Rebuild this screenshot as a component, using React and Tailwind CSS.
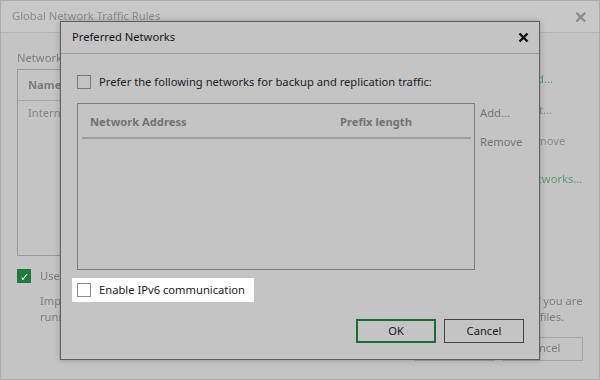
import React from 'react';

const font = "font-['Noto_Sans','Liberation_Sans',sans-serif]";

const Box = ({ className = '' }) => (
  <span className={`block w-[14px] h-[14px] border shrink-0 ${className}`} />
);

const BackgroundWindow = () => (
  <div className="w-full h-full border border-[#ababab] bg-[#c4c4c4] blur-[0.7px] flex flex-col overflow-hidden">
    <div className="h-[32px] border-b border-[#b4b4b4] bg-[#c8c8c8] flex items-center justify-between pl-[11px] pr-[12px]">
      <span className="text-[11.2px] text-[#8c8c8c]">Global Network Traffic Rules</span>
      <span className="text-[16px] font-bold text-[#8c8c8c]">✕</span>
    </div>
    <div className="flex flex-col px-[16px] text-[11.2px]">
      <div className="mt-[16px] leading-[18px] text-[#7e7e7e]">Network traffic rules:</div>
      <div className="flex mt-[2px] gap-[10px]">
        <div className="w-[440px] h-[187px] border border-[#9a9a9a] flex flex-col shrink-0">
          <div className="h-[31px] border-b border-[#a8a8a8] flex items-center pl-[10px] font-bold text-[#7a7a7a]">
            Name
          </div>
          <div className="pl-[10px] pt-[4px] text-[#858585]">Internet</div>
        </div>
        <div className="flex flex-col gap-[14px] pt-[2px] pl-[56px] text-[#8a8a8a] whitespace-nowrap">
          <span className="text-[#5e9a6e]">Add...</span>
          <span>Edit...</span>
          <span>Remove</span>
          <span className="mt-[8px] text-[#5e9a6e]">Networks...</span>
        </div>
      </div>
      <div className="mt-[12px] flex items-center gap-[9px]">
        <span className="w-[14px] h-[14px] bg-[#1f7a3e] flex items-center justify-center text-white text-[11px] leading-none">✓</span>
        <span className="text-[#7e7e7e]">Use multiple upload streams per job</span>
      </div>
      <div className="mt-[8px] ml-[23px] leading-[16px] text-[#7e7e7e] whitespace-nowrap flex flex-col">
        <span>Important: enabling this option may significantly increase the load on the backup source host if you are</span>
        <span>running many concurrent jobs over slow links, or working with very large numbers of small log files.</span>
      </div>
      <div className="mt-[12px] flex justify-end gap-[8px]">
        <span className="w-[80px] h-[24px] border border-[#a4a4a4] flex items-center justify-center text-[#7e7e7e]">OK</span>
        <span className="w-[80px] h-[24px] border border-[#a4a4a4] flex items-center justify-center text-[#7e7e7e]">Cancel</span>
      </div>
    </div>
  </div>
);

const PreferredNetworks = () => (
  <div className="absolute left-[60px] top-[21px] w-[480px] h-[339px] border border-[#5e5e5e] bg-[#c4c4c4] shadow-[0_0_6px_rgba(0,0,0,0.25)] flex flex-col text-[11.2px]">
    <div className="h-[32px] border-b border-[#9c9c9c] flex items-center justify-between pl-[11px] pr-[10px]">
      <span className="text-[#141414]">Preferred Networks</span>
      <svg width="11" height="11" viewBox="0 0 11 11">
        <path d="M1.5 1.5 L9.5 9.5 M9.5 1.5 L1.5 9.5" stroke="#111" strokeWidth="2.4" />
      </svg>
    </div>

    <div className="mt-[21px] ml-[16px] flex items-center gap-[8px] h-[14px]">
      <Box className="border-[#7a7a7a]" />
      <span className="leading-[14px] text-[#1c1c1c] whitespace-nowrap">
        Prefer the following networks for backup and replication traffic:
      </span>
    </div>

    <div className="mt-[14px] ml-[16px] flex gap-[5px]">
      <div className="w-[398px] h-[167px] border border-[#7c7c7c] flex flex-col">
        <div className="flex pt-[9px] leading-[18px] font-bold text-[#727272]">
          <span className="pl-[12px] w-[262px]">Network Address</span>
          <span>Prefix length</span>
        </div>
        <div className="mt-[6px] ml-[4px] mr-[3px] h-[2px] bg-[#9da2a0]" />
      </div>
      <div className="flex flex-col pt-[1px] gap-[11px] leading-[18px] text-[#767676]">
        <span>Add...</span>
        <span>Remove</span>
      </div>
    </div>

    <div className="mt-[8px] ml-[11px] w-[182px] h-[24px] bg-white flex items-center gap-[8px] pl-[5px]">
      <Box className="border-[#8c8c8c]" />
      <span className="text-[#1a1a1a] whitespace-nowrap">Enable IPv6 communication</span>
    </div>

    <div className="mt-[17px] mr-[15px] flex justify-end gap-[8px]">
      <button className="w-[80px] h-[24px] border-2 border-[#1d6a36] flex items-center justify-center text-[#1a1a1a]">
        OK
      </button>
      <button className="w-[80px] h-[24px] border border-[#444444] flex items-center justify-center text-[#1a1a1a]">
        Cancel
      </button>
    </div>
  </div>
);

export default function App() {
  return (
    <div className={`relative w-[600px] h-[380px] overflow-hidden bg-[#c4c4c4] ${font}`}>
      <BackgroundWindow />
      <PreferredNetworks />
    </div>
  );
}
